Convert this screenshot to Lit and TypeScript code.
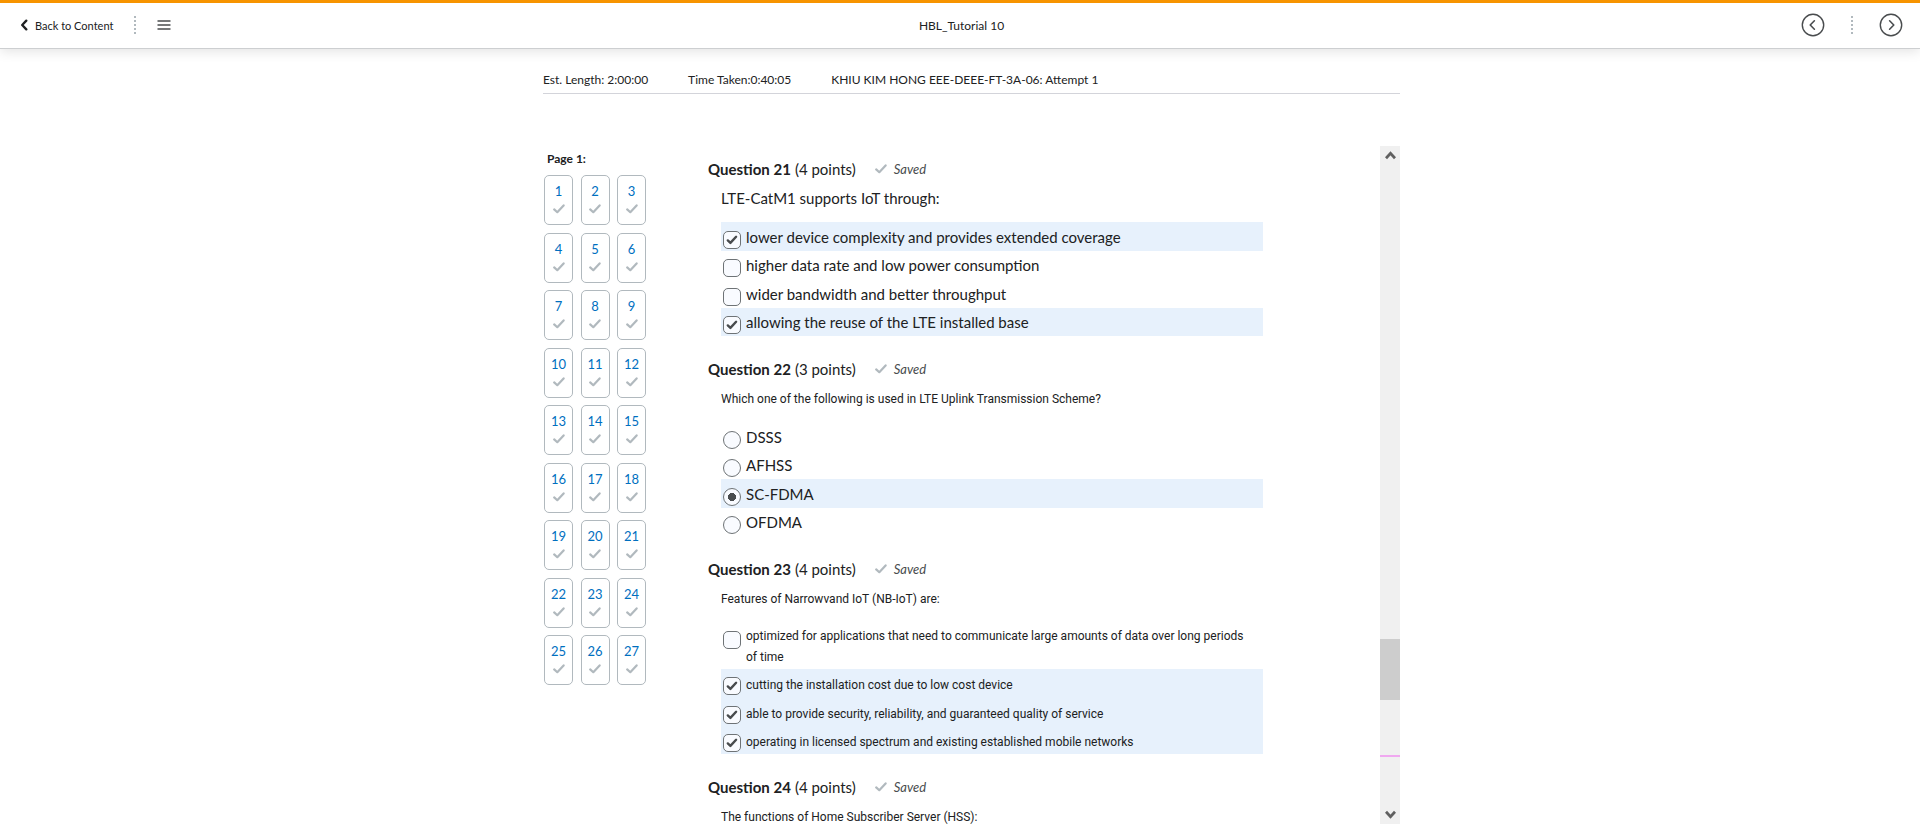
import { LitElement, html, css } from "lit";
import { customElement, property } from "lit/decorators.js";
import { classMap } from "lit/directives/class-map.js";

interface Option {
  text: string;
  checked?: boolean;
}

interface Question {
  id: number;
  points: number;
  prompt: string;
  kind: "checkbox" | "radio";
  smallPrompt?: boolean;
  smallOptions?: boolean;
  options: Option[];
}

const QUESTIONS: Question[] = [
  {
    id: 21,
    points: 4,
    prompt: "LTE-CatM1 supports IoT through:",
    kind: "checkbox",
    options: [
      { text: "lower device complexity and provides extended coverage", checked: true },
      { text: "higher data rate and low power consumption" },
      { text: "wider bandwidth and better throughput" },
      { text: "allowing the reuse of the LTE installed base", checked: true },
    ],
  },
  {
    id: 22,
    points: 3,
    prompt: "Which one of the following is used in LTE Uplink Transmission Scheme?",
    kind: "radio",
    smallPrompt: true,
    options: [
      { text: "DSSS" },
      { text: "AFHSS" },
      { text: "SC-FDMA", checked: true },
      { text: "OFDMA" },
    ],
  },
  {
    id: 23,
    points: 4,
    prompt: "Features of Narrowvand IoT (NB-IoT) are:",
    kind: "checkbox",
    smallPrompt: true,
    smallOptions: true,
    options: [
      {
        text: "optimized for applications that need to communicate large amounts of data over long periods of time",
      },
      { text: "cutting the installation cost due to low cost device", checked: true },
      { text: "able to provide security, reliability, and guaranteed quality of service", checked: true },
      { text: "operating in licensed spectrum and existing established mobile networks", checked: true },
    ],
  },
  {
    id: 24,
    points: 4,
    prompt: "The functions of Home Subscriber Server (HSS):",
    kind: "checkbox",
    smallPrompt: true,
    options: [],
  },
];

const checkIcon = html`<svg width="12" height="10" viewBox="0 0 12 10" aria-hidden="true">
  <path d="M1.2 5.4 4.3 8.2 10.6 1.4" fill="none" stroke="#b1b9be" stroke-width="2.2" stroke-linecap="round" stroke-linejoin="round" />
</svg>`;

@customElement("quiz-question")
class QuizQuestion extends LitElement {
  @property({ attribute: false }) question!: Question;

  static styles = css`
    :host {
      display: block;
      color: #202122;
    }
    .heading {
      display: flex;
      align-items: center;
      margin: 0;
      font-size: 15px;
      line-height: 24px;
      font-weight: 400;
    }
    .number {
      margin-right: 4px;
      font-weight: 700;
    }
    .saved {
      display: flex;
      align-items: center;
      gap: 7px;
      margin-left: 19px;
      font-size: 13px;
      font-style: italic;
      color: #494c4e;
    }
    .body {
      min-width: 0;
      margin: 0;
      padding: 7px 0 0 13px;
      border: 0;
    }
    .prompt {
      margin: 0 0 13px;
      font-size: 15px;
      line-height: 21px;
    }
    .prompt.small {
      margin-bottom: 11px;
      line-height: 23px;
    }
    .prompt.small,
    .options.small {
      font-family: Roboto, "Open Sans", sans-serif;
      font-size: 12px;
    }
    .options {
      margin: 0;
      padding: 0;
      list-style: none;
      font-size: 15px;
      line-height: 21px;
    }
    .option {
      display: flex;
      align-items: flex-end;
      gap: 5px;
      box-sizing: border-box;
      min-height: 28px;
      padding: 3px 8px 1px 2px;
    }
    .option:nth-child(odd) {
      min-height: 29px;
    }
    .small .option {
      padding-top: 4px;
    }
    .option.selected {
      background: #e7f1fc;
    }
    .label {
      flex: 1;
      padding-bottom: 2px;
    }
    .small .label {
      padding-bottom: 0;
    }
    .control {
      appearance: none;
      flex: none;
      align-self: flex-start;
      box-sizing: border-box;
      width: 18px;
      height: 18px;
      margin: 6px 0 0;
      border: 1px solid #6e7376;
      border-radius: 5px;
      background: #f9fbff center no-repeat;
    }
    .option:nth-child(even) .control,
    .small .control {
      margin-top: 5px;
    }
    .small .option:nth-child(even) .control {
      margin-top: 4px;
    }
    .control[type="radio"] {
      border-radius: 50%;
    }
    .control[type="checkbox"]:checked {
      background-image: url("data:image/svg+xml,%3Csvg xmlns='http://www.w3.org/2000/svg' width='12' height='10' viewBox='0 0 12 10'%3E%3Cpath d='M1.8 5.4 4.4 7.9 10.1 1.8' fill='none' stroke='%23494c4e' stroke-width='2.4' stroke-linecap='round' stroke-linejoin='round'/%3E%3C/svg%3E");
    }
    .control[type="radio"]:checked {
      background-image: radial-gradient(circle, #494c4e 4px, transparent 4px);
    }
  `;

  render() {
    const q = this.question;
    return html`
      <h2 class="heading" id="heading">
        <span class="number">Question ${q.id}</span>
        <span>(${q.points} points)</span>
        <span class="saved">${checkIcon}Saved</span>
      </h2>
      <fieldset class="body" aria-labelledby="heading">
        <p class=${classMap({ prompt: true, small: !!q.smallPrompt })}>${q.prompt}</p>
        <ul class=${classMap({ options: true, small: !!q.smallOptions })}>
          ${q.options.map(
            (o, i) => html`<li class=${classMap({ option: true, selected: !!o.checked })}>
              <input class="control" id="option-${i}" type=${q.kind} name="question-${q.id}" .checked=${!!o.checked} />
              <label class="label" for="option-${i}">${o.text}</label>
            </li>`
          )}
        </ul>
      </fieldset>
    `;
  }
}

@customElement("app-root")
class AppRoot extends LitElement {
  static styles = css`
    :host {
      display: flex;
      flex-direction: column;
      box-sizing: border-box;
      height: 100vh;
      overflow: hidden;
      background: #fff;
      color: #202122;
      font-family: Lato, "Liberation Sans", sans-serif;
      font-size: 12px;
    }
    button {
      display: flex;
      align-items: center;
      padding: 0;
      border: 0;
      background: none;
      color: inherit;
      font: inherit;
    }
    .topbar {
      display: grid;
      grid-template-columns: 1fr auto 1fr;
      align-items: center;
      box-sizing: border-box;
      height: 49px;
      padding: 0 17px 1px 20px;
      border-top: 3px solid #f79400;
      border-bottom: 1px solid #cdcfd1;
      box-shadow: 0 2px 12px rgba(0, 0, 0, 0.12);
    }
    .left,
    .right {
      display: flex;
      align-items: center;
    }
    .left {
      gap: 21px;
    }
    .right {
      justify-content: flex-end;
      gap: 26px;
    }
    .back {
      display: flex;
      align-items: center;
      gap: 7px;
      color: inherit;
      font-size: 11px;
      text-decoration: none;
    }
    .divider {
      height: 18px;
      border-left: 2px dotted #b1b9be;
    }
    .title {
      margin: 0;
      font-size: 12px;
      font-weight: 400;
    }
    .page {
      display: flex;
      flex: 1;
      flex-direction: column;
      box-sizing: border-box;
      width: 100%;
      max-width: 880px;
      min-height: 0;
      margin: 0 auto;
      padding: 22px 0 13px 23px;
    }
    .info {
      display: flex;
      gap: 40px;
      padding-bottom: 4px;
      border-bottom: 1px solid #d3d4da;
      line-height: 18px;
    }
    .content {
      display: flex;
      flex: 1;
      min-height: 0;
      margin-top: 52px;
    }
    .pages {
      width: 104px;
      padding-left: 1px;
    }
    .pages-title {
      margin: 0 0 8px;
      padding: 4px 0 0 3px;
      font-size: 12px;
      line-height: 17px;
      font-weight: 700;
    }
    .tiles {
      display: grid;
      grid-template-columns: repeat(3, 29px);
      justify-content: space-between;
      align-content: space-between;
      width: 102px;
      height: 510px;
    }
    .tile {
      display: flex;
      flex-direction: column;
      align-items: center;
      gap: 5px;
      box-sizing: border-box;
      height: 50px;
      padding-top: 7px;
      border: 1px solid #b1b9be;
      border-radius: 5px;
      color: #006fbf;
      font-size: 13px;
      line-height: 16px;
      text-decoration: none;
    }
    .questions {
      display: flex;
      flex: 1;
      flex-direction: column;
      gap: 21px;
      min-width: 0;
      overflow: hidden;
      padding: 11px 117px 0 60px;
    }
    .scrollbar {
      display: flex;
      flex-direction: column;
      align-items: center;
      width: 20px;
      background: #f0f0f0;
    }
    .arrow {
      justify-content: center;
      width: 20px;
      height: 19px;
    }
    .track {
      display: flex;
      flex: 1;
      flex-direction: column;
      width: 100%;
    }
    .before {
      flex: 474;
    }
    .thumb {
      flex: 61;
      background: #cdcdcd;
    }
    .after {
      flex: 55;
    }
    .mark {
      height: 2px;
      background: #f0a8f0;
    }
    .end {
      flex: 48;
    }
  `;

  render() {
    const chevron = (d: string) => html`<svg width="24" height="24" viewBox="0 0 24 24" fill="none" stroke="#494c4e" aria-hidden="true">
      <circle cx="12" cy="12" r="10.7" stroke-width="1.4" />
      <path d=${d} stroke-width="1.6" stroke-linecap="round" stroke-linejoin="round" />
    </svg>`;
    const arrow = (d: string) => html`<svg width="11" height="9" viewBox="0 0 11 9" aria-hidden="true">
      <path d=${d} fill="none" stroke="#606060" stroke-width="2.8" />
    </svg>`;
    return html`
      <header class="topbar">
        <div class="left">
          <a class="back" href="#content">
            <svg width="8" height="12" viewBox="0 0 8 12" aria-hidden="true">
              <path d="M6.3 1.6 2.2 6l4.1 4.4" fill="none" stroke="#202122" stroke-width="2.3" stroke-linecap="round" stroke-linejoin="round" />
            </svg>
            Back to Content
          </a>
          <span class="divider"></span>
          <button type="button" aria-label="Menu">
            <svg width="14" height="12" viewBox="0 0 14 12" aria-hidden="true">
              <path d="M0.5 2h13M0.5 6h13M0.5 10h13" stroke="#494c4e" stroke-width="1.4" />
            </svg>
          </button>
        </div>
        <h1 class="title">HBL_Tutorial 10</h1>
        <div class="right">
          <button type="button" aria-label="Previous">${chevron("M13.4 7.8 9.2 12l4.2 4.2")}</button>
          <span class="divider"></span>
          <button type="button" aria-label="Next">${chevron("M10.6 7.8 14.8 12l-4.2 4.2")}</button>
        </div>
      </header>
      <main class="page" id="content">
        <div class="info">
          <span>Est. Length: 2:00:00</span>
          <span>Time Taken:0:40:05</span>
          <span>KHIU KIM HONG EEE-DEEE-FT-3A-06: Attempt 1</span>
        </div>
        <div class="content">
          <nav class="pages" aria-label="Questions">
            <h2 class="pages-title">Page 1:</h2>
            <div class="tiles">
              ${Array.from({ length: 27 }, (_, i) => html`<a class="tile" href="#q${i + 1}">${i + 1}${checkIcon}</a>`)}
            </div>
          </nav>
          <section class="questions">
            ${QUESTIONS.map((q) => html`<quiz-question id="q${q.id}" .question=${q}></quiz-question>`)}
          </section>
          <div class="scrollbar">
            <button class="arrow" type="button" aria-label="Scroll up">${arrow("M1 7.2 5.5 2.4 10 7.2")}</button>
            <div class="track">
              <div class="before"></div>
              <div class="thumb"></div>
              <div class="after"></div>
              <div class="mark"></div>
              <div class="end"></div>
            </div>
            <button class="arrow" type="button" aria-label="Scroll down">${arrow("M1 1.8 5.5 6.6 10 1.8")}</button>
          </div>
        </div>
      </main>
    `;
  }
}
